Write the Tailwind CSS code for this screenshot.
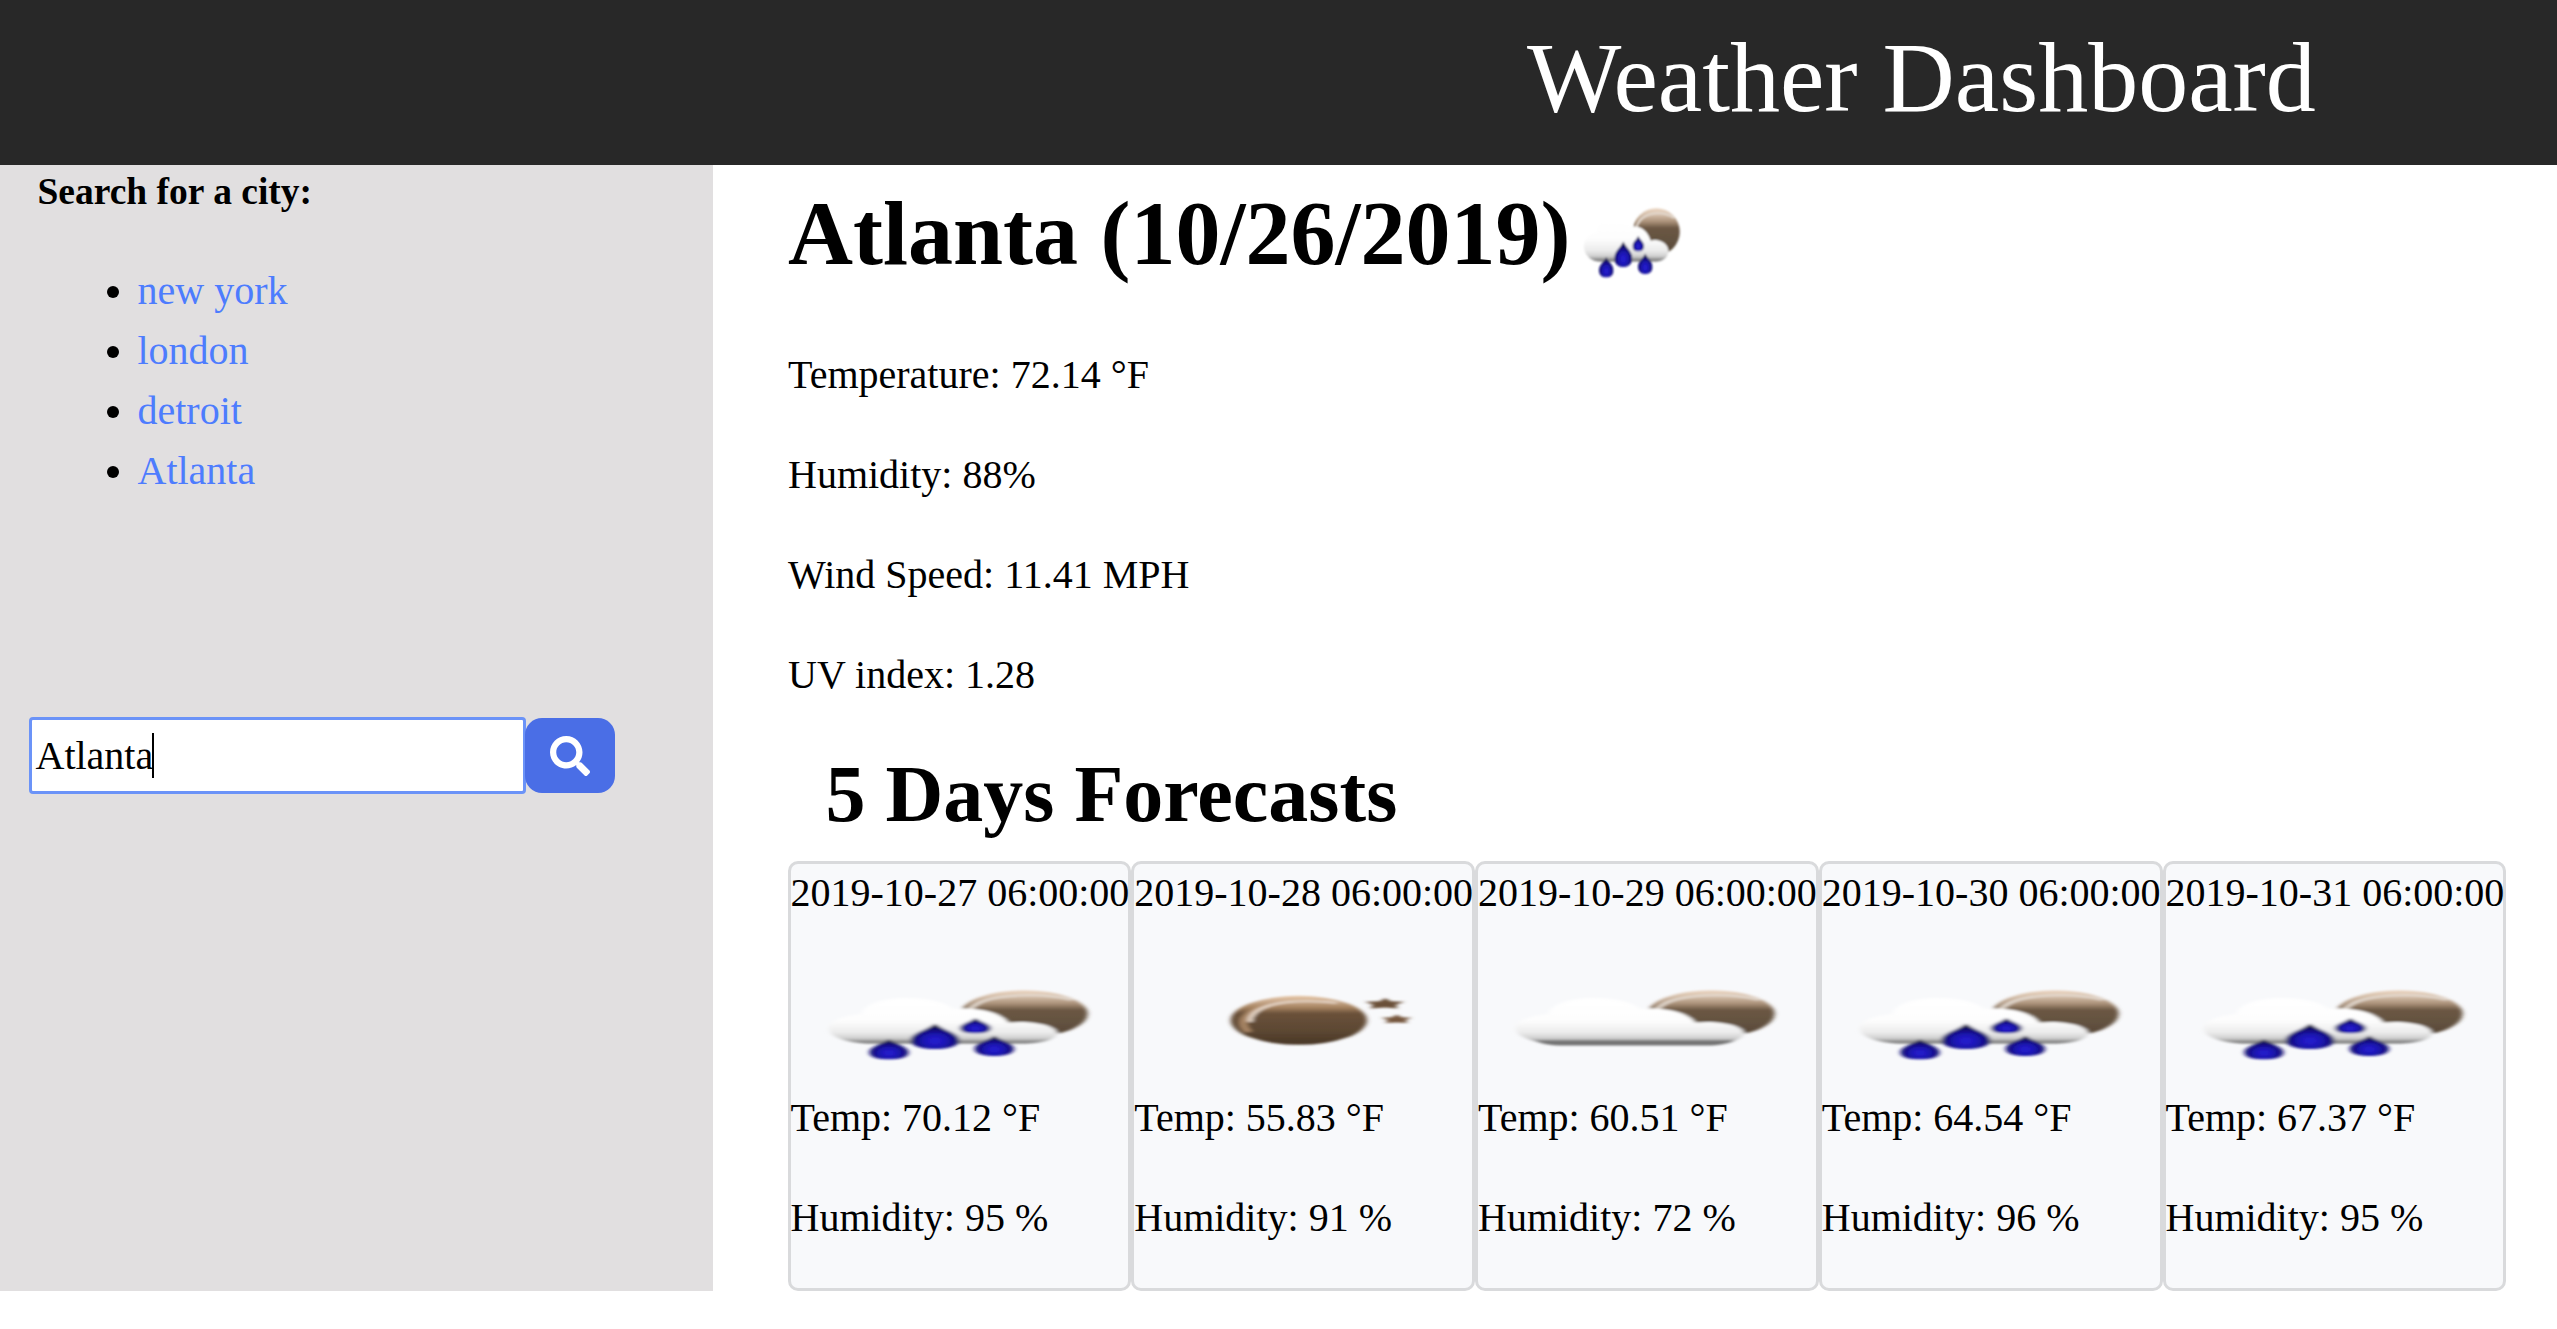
<!DOCTYPE html>
<html lang="en">
<head>
<meta charset="utf-8">
<title>Weather Dashboard</title>
<script src="https://cdn.jsdelivr.net/npm/@tailwindcss/browser@4"></script>
</head>
<body class="bg-white text-black font-['Liberation_Serif','Times_New_Roman',serif] text-[40px] leading-[60px] overflow-hidden">
<!-- Shared weather icon symbols -->
<svg width="0" height="0" class="absolute">
  <defs>
    <linearGradient id="moonFill" x1="0" y1="0" x2="0" y2="1">
      <stop offset="0" stop-color="#e8c8a8"/><stop offset=".12" stop-color="#c8a98c"/><stop offset=".24" stop-color="#a5825f"/><stop offset=".36" stop-color="#6a513a"/><stop offset=".7" stop-color="#5d4833"/><stop offset="1" stop-color="#483626"/>
    </linearGradient>
    <linearGradient id="paleMoonFill" x1="0" y1="0" x2="0" y2="1">
      <stop offset="0" stop-color="#ecd6c2"/><stop offset=".14" stop-color="#d3bda8"/><stop offset=".28" stop-color="#ab927a"/><stop offset=".42" stop-color="#6b5743"/><stop offset=".7" stop-color="#625140"/><stop offset="1" stop-color="#544433"/>
    </linearGradient>
    <linearGradient id="cloudFill" x1="0" y1="0" x2="0" y2="1">
      <stop offset="0" stop-color="#ffffff"/><stop offset=".5" stop-color="#fdfdfd"/><stop offset=".75" stop-color="#ececec"/><stop offset=".88" stop-color="#d2d2d2"/><stop offset=".95" stop-color="#969696"/><stop offset="1" stop-color="#606060"/>
    </linearGradient>
    <radialGradient id="dropFill" cx=".5" cy=".68" r=".6">
      <stop offset="0" stop-color="#261ed2"/><stop offset=".4" stop-color="#1c15b4"/><stop offset="1" stop-color="#07053f"/>
    </radialGradient>
    <filter id="soft" x="-10%" y="-10%" width="120%" height="120%"><feGaussianBlur stdDeviation="1"/></filter>
    <symbol id="drop" viewBox="0 0 16 24" preserveAspectRatio="none">
      <path fill="url(#dropFill)" d="M8 0C10 5.500 16 9 16 15.700C16 21 12.500 24 8 24S0 21 0 15.700C0 9 6 5.500 8 0Z"/>
    </symbol>
    <symbol id="cloudmoon" viewBox="0 0 125 125" preserveAspectRatio="none">
      <circle cx="86.300" cy="53.800" r="23.500" fill="url(#paleMoonFill)"/>
      <path d="M66 50C69 40 77 35.500 88 35.200C95 35 100 37 104 40" fill="none" stroke="#e4dad0" stroke-width="2"/>
      <path fill="url(#cloudFill)" d="M30 83.500C20 83.500 14 76 14 68.500C14 61 19 56 26 54C27 45 33 38 43 38C51 38 57 42 60 49C70 46.500 78 53 80.500 62.500C90 60 98.500 66 98.500 73C98.500 79 93 83.500 86 83.500Z"/>
    </symbol>
    <symbol id="rain" viewBox="0 0 125 125" preserveAspectRatio="none">
      <g filter="url(#soft)">
        <use href="#cloudmoon" width="125" height="125"/>
        <use href="#drop" x="29" y="79" width="14.500" height="20.500"/>
        <use href="#drop" x="44.300" y="63.500" width="18" height="25.500"/>
        <use href="#drop" x="62.500" y="58" width="11.500" height="15.500"/>
        <use href="#drop" x="68" y="75.500" width="14.500" height="20.500"/>
      </g>
    </symbol>
    <symbol id="clouds" viewBox="0 0 125 125" preserveAspectRatio="none">
      <g filter="url(#soft)">
        <use href="#cloudmoon" width="125" height="125"/>
        <path d="M21 80.500H95C92.500 84 89 85.500 85 85.500H31C27 85.500 23 83.500 21 80.500Z" fill="#737373"/>
      </g>
    </symbol>
    <symbol id="clear" viewBox="0 0 125 125" preserveAspectRatio="none">
      <g filter="url(#soft)">
        <ellipse cx="61" cy="60.300" rx="25.200" ry="24.500" fill="url(#moonFill)"/>
        <path d="M42.500 72C38.500 63 40.500 53 48 46.500C55 41 66 40 75 43.500" fill="none" stroke="#b8926f" stroke-width="3" opacity=".8"/>
        <path d="M43 62C42.500 51 50 42.500 60 41.500C66 41 71 41.500 75 43" fill="none" stroke="#e6d6c7" stroke-width="2"/>
        <path fill="#6a4f38" d="M93 38L95 41.200L100 41.800L97 44.800L97.500 48.500L93 47.500L87.500 48.500L88.500 44.800L85.500 41.800L91 41.200Z"/>
        <path fill="#76573d" d="M97.300 54.500L99 57.200L102.800 57.800L100.500 60L101.200 63L97.300 62.400L93 63L94 60L91.500 57.800L95.500 57.200Z"/>
      </g>
    </symbol>
  </defs>
</svg>

<header class="h-[165px] bg-[#282828] flex items-center pb-2.5 pl-[1527px]">
  <div class="text-[100px] leading-[150px] text-white whitespace-nowrap">Weather Dashboard</div>
</header>

<div class="flex h-[1126px]">
  <aside class="w-[713px] shrink-0 bg-[#e1dfe0]">
    <h4 class="pl-[37.500px] text-[37.500px] leading-[54px] font-bold">Search for a city:</h4>
    <ul class="mt-[42px] pl-[107px] text-[#4d7cfe]">
      <li class="flex items-center gap-[18.500px]"><span class="size-3 rounded-full bg-black mt-0.5"></span>new york</li>
      <li class="flex items-center gap-[18.500px]"><span class="size-3 rounded-full bg-black mt-0.5"></span>london</li>
      <li class="flex items-center gap-[18.500px]"><span class="size-3 rounded-full bg-black mt-0.5"></span>detroit</li>
      <li class="flex items-center gap-[18.500px]"><span class="size-3 rounded-full bg-black mt-0.5"></span>Atlanta</li>
    </ul>
    <div class="mt-[216px] pl-[29px] flex items-center">
      <div class="w-[497px] h-[77px] bg-white border-3 border-[#6b93f8] rounded-[4px] flex items-center pl-[3.500px]">
        <span>Atlanta</span><span class="w-[2px] h-[45px] -ml-px bg-black"></span>
      </div>
      <button class="w-[90px] h-[75px] -ml-px rounded-[17px] bg-[#4a6ee6] flex items-center justify-center">
        <svg class="size-10" viewBox="0 0 512 512" fill="#fff"><path d="M505 442.700L405.300 343c-4.500-4.500-10.600-7-17-7H372c27.600-35.300 44-79.700 44-128C416 93.100 322.900 0 208 0S0 93.100 0 208s93.100 208 208 208c48.300 0 92.700-16.400 128-44v16.300c0 6.400 2.500 12.500 7 17l99.700 99.700c9.400 9.400 24.600 9.400 33.900 0l28.300-28.300c9.400-9.400 9.400-24.600.1-34zM208 336c-70.700 0-128-57.200-128-128 0-70.700 57.200-128 128-128 70.700 0 128 57.200 128 128 0 70.700-57.200 128-128 128z"/></svg>
      </button>
    </div>
  </aside>

  <main class="pl-[75px] pt-[15px]">
    <div class="flex h-[108px] items-start">
      <h1 class="text-[90px] leading-[108px] font-bold whitespace-nowrap">Atlanta (10/26/2019)</h1>
      <svg class="w-[125px] h-[125px] -mt-[2.500px] shrink-0"><use href="#rain" width="125" height="125"/></svg>
    </div>
    <div class="mt-[57px] flex flex-col gap-10">
      <p>Temperature: 72.14 °F</p>
      <p>Humidity: 88%</p>
      <p>Wind Speed: 11.41 MPH</p>
      <p>UV index: 1.28</p>
    </div>
    <h2 class="mt-[41px] pl-[37.500px] text-[80px] leading-[96px] font-bold">5 Days Forecasts</h2>
    <div class="mt-[19px] -ml-[0.500px] flex whitespace-nowrap">
      <section class="w-[343.750px] h-[430px] bg-[#f8f9fb] border-3 border-[#d9dadc] rounded-[10px]">
        <p class="leading-[58px]">2019-10-27 06:00:00</p>
        <svg class="mt-[38px] w-full h-[125px]"><use href="#rain" width="100%" height="125"/></svg>
        <p class="mt-[3px]">Temp: 70.12 °F</p><p class="mt-10">Humidity: 95 %</p>
      </section>
      <section class="w-[343.750px] h-[430px] bg-[#f8f9fb] border-3 border-[#d9dadc] rounded-[10px]">
        <p class="leading-[58px]">2019-10-28 06:00:00</p>
        <svg class="mt-[38px] w-full h-[125px]"><use href="#clear" width="100%" height="125"/></svg>
        <p class="mt-[3px]">Temp: 55.83 °F</p><p class="mt-10">Humidity: 91 %</p>
      </section>
      <section class="w-[343.750px] h-[430px] bg-[#f8f9fb] border-3 border-[#d9dadc] rounded-[10px]">
        <p class="leading-[58px]">2019-10-29 06:00:00</p>
        <svg class="mt-[38px] w-full h-[125px]"><use href="#clouds" width="100%" height="125"/></svg>
        <p class="mt-[3px]">Temp: 60.51 °F</p><p class="mt-10">Humidity: 72 %</p>
      </section>
      <section class="w-[343.750px] h-[430px] bg-[#f8f9fb] border-3 border-[#d9dadc] rounded-[10px]">
        <p class="leading-[58px]">2019-10-30 06:00:00</p>
        <svg class="mt-[38px] w-full h-[125px]"><use href="#rain" width="100%" height="125"/></svg>
        <p class="mt-[3px]">Temp: 64.54 °F</p><p class="mt-10">Humidity: 96 %</p>
      </section>
      <section class="w-[343.750px] h-[430px] bg-[#f8f9fb] border-3 border-[#d9dadc] rounded-[10px]">
        <p class="leading-[58px]">2019-10-31 06:00:00</p>
        <svg class="mt-[38px] w-full h-[125px]"><use href="#rain" width="100%" height="125"/></svg>
        <p class="mt-[3px]">Temp: 67.37 °F</p><p class="mt-10">Humidity: 95 %</p>
      </section>
    </div>
  </main>
</div>
</body>
</html>
